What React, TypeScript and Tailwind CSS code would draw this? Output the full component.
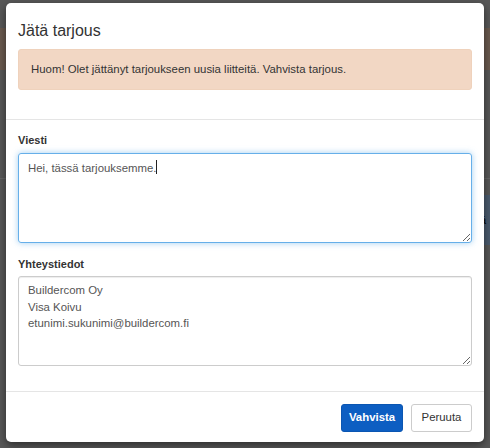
import React from "react"

const font = { fontFamily: '"Liberation Sans", Arial, sans-serif' }

export default function App() {
  return (
    <div className="relative w-[490px] h-[448px] overflow-hidden bg-[#585858]" style={font}>
      {/* page behind the overlay */}
      <div className="flex flex-col">
        <div className="h-[28px]" />
        <div className="h-[42px] bg-[#6a5a4f]" />
        <div className="h-[108px]" />
        <div className="h-px bg-[#666]" />
        <div className="flex justify-end pt-[16px]">
          <div className="w-[10px] h-[50px] bg-[#4b5b6e] flex items-center text-[11px] text-black">ä</div>
        </div>
      </div>

      {/* modal */}
      <div className="absolute left-[6px] top-[3px] w-[478px] h-[439px] bg-white rounded-[5px] shadow-[0_3px_9px_rgba(0,0,0,0.5)] flex flex-col">
        <div className="px-[12px]">
          <h4 className="pt-[15px] h-[41px] text-[16px] leading-[26px] text-[#333]">Jätä tarjous</h4>
          <div className="mt-[5px] h-[41px] rounded-[3px] bg-[#f2d7c4] border border-[#efd2bc] flex items-center px-[12px] text-[11.4px] text-[#333]">
            Huom! Olet jättänyt tarjoukseen uusia liitteitä. Vahvista tarjous.
          </div>
        </div>
        <div className="mt-[29px] h-px bg-[#e5e5e5]" />

        <div className="px-[12px] pt-[12px]">
          <label className="block text-[11px] font-bold leading-[17px] text-[#333] mb-[4px]">Viesti</label>
          <div className="relative">
            <textarea
              readOnly
              defaultValue="Hei, tässä tarjouksemme."
              className="block w-[454px] h-[90px] rounded-[3px] border border-[#66afe9] shadow-[0_0_6px_rgba(102,175,233,0.6)] px-[9px] py-[6px] text-[11.4px] leading-[16.5px] text-[#555] outline-none"
              style={font}
            />
            {/* text caret */}
            <span className="absolute left-[138px] top-[7px] w-px h-[14px] bg-[#222]" />
          </div>
          <label className="block mt-[13px] text-[11px] font-bold leading-[17px] text-[#333] mb-[3px]">Yhteystiedot</label>
          <textarea
            readOnly
            defaultValue={"Buildercom Oy\nVisa Koivu\netunimi.sukunimi@buildercom.fi"}
            className="block w-[454px] h-[90px] rounded-[3px] border border-[#ccc] shadow-[inset_0_1px_1px_rgba(0,0,0,0.075)] px-[9px] py-[5px] text-[11.4px] leading-[16.5px] text-[#555] outline-none"
            style={font}
          />
        </div>
        <div className="mt-[25px] h-px bg-[#e5e5e5]" />

        <div className="flex justify-end gap-[8px] px-[12px] pt-[12px]">
          <button className="w-[62px] h-[28px] rounded-[3px] bg-[#0d5ec2] border border-[#0b56b2] text-white text-[11.4px] font-bold">
            Vahvista
          </button>
          <button className="w-[61px] h-[28px] rounded-[3px] bg-white border border-[#ccc] text-[#333] text-[11.4px]">
            Peruuta
          </button>
        </div>
      </div>
    </div>
  )
}
